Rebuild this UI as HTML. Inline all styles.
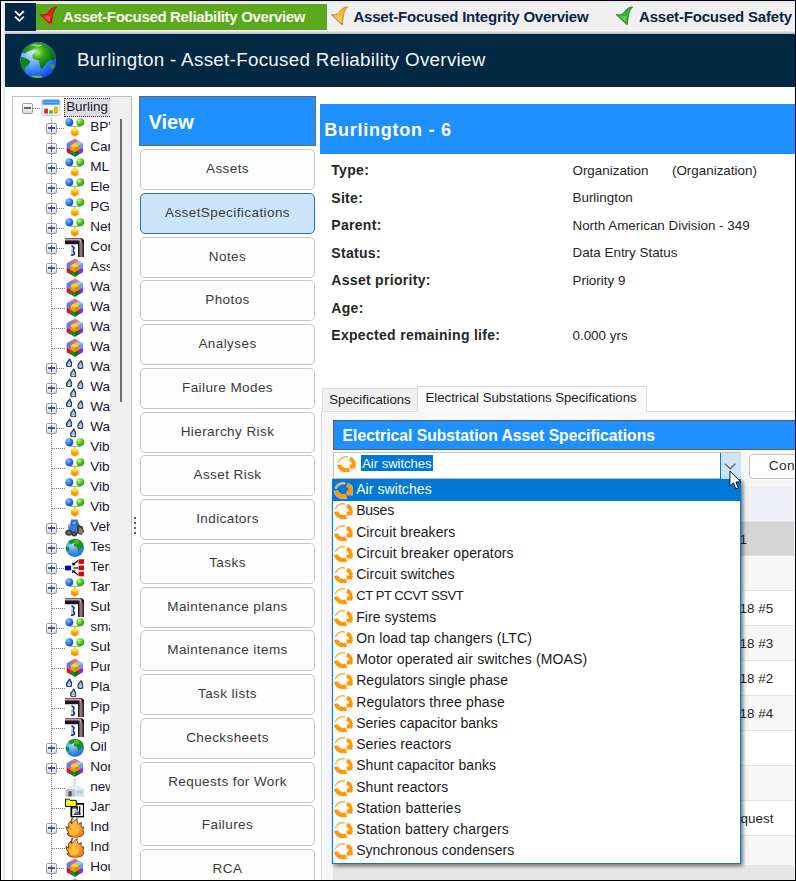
<!DOCTYPE html>
<html><head><meta charset="utf-8"><title>Asset-Focused Reliability Overview</title>
<style>
html,body{margin:0;padding:0}
body{width:796px;height:881px;overflow:hidden;position:relative;background:#fff;font-family:"Liberation Sans",sans-serif;}
div,span,svg{position:absolute;box-sizing:border-box}
.t{line-height:1;white-space:pre}
.btn{left:140px;width:175px;height:41px;border:1px solid #c6c6c6;border-radius:5px;background:#fdfdfd;text-align:center;font-size:13.5px;letter-spacing:.42px;color:#3a3a3a;line-height:37px;white-space:pre}
.btn.sel{background:#cce4f7;border:1.5px solid #2a70b4;}
.li{left:0;width:407px;height:21.25px}
.li .t{left:23.2px;font-size:14px;top:2.5px;color:#1a1a1a;letter-spacing:.07px}
.row{left:333px;width:461px;border-top:1px solid #e3e3e3}
</style></head>
<body>
<svg width="0" height="0" style="left:0;top:0"><defs>
<radialGradient id="gB" cx=".35" cy=".3" r=".8"><stop offset="0" stop-color="#8cc4ff"/><stop offset=".5" stop-color="#2b7bf0"/><stop offset="1" stop-color="#1440b0"/></radialGradient>
<radialGradient id="gG" cx=".35" cy=".3" r=".8"><stop offset="0" stop-color="#c8ff80"/><stop offset=".5" stop-color="#4cc81c"/><stop offset="1" stop-color="#1c8c08"/></radialGradient>
<radialGradient id="gGl" cx=".4" cy=".3" r=".8"><stop offset="0" stop-color="#b8e4ff"/><stop offset=".55" stop-color="#3c96f4"/><stop offset="1" stop-color="#1450d0"/></radialGradient>
<linearGradient id="gO" x1="0" y1="0" x2="0" y2="1"><stop offset="0" stop-color="#ffd800"/><stop offset="1" stop-color="#ff7800"/></linearGradient>
<linearGradient id="gF" x1="0" y1="0" x2="0" y2="1"><stop offset="0" stop-color="#ffd060"/><stop offset="1" stop-color="#ff7000"/></linearGradient>
<radialGradient id="gOc" gradientUnits="userSpaceOnUse" cx="12" cy="10" r="27"><stop offset="0" stop-color="#cce8ff"/><stop offset=".4" stop-color="#68b4fb"/><stop offset=".75" stop-color="#2c74f6"/><stop offset="1" stop-color="#1c48dc"/></radialGradient>
<radialGradient id="gLd" gradientUnits="userSpaceOnUse" cx="17" cy="10" r="16"><stop offset="0" stop-color="#b4ee54"/><stop offset=".45" stop-color="#34a41c"/><stop offset="1" stop-color="#087408"/></radialGradient>
<clipPath id="cpG"><circle cx="18" cy="18" r="17.600"/></clipPath>
<symbol id="bigglobe" viewBox="0 0 36 36">
 <circle cx="18" cy="18" r="18" fill="#1a4ee0" opacity=".85"/>
 <circle cx="18" cy="18" r="17.500" fill="url(#gOc)"/>
 <g clip-path="url(#cpG)">
 <path d="M6.300 4.200C4 6 2.800 8 2.100 10.300 3.500 11.200 4.800 11.300 5.700 10.900 7.500 9.500 9.500 8.300 11.800 7.800 13.500 7.400 15 7 16 7.200 16.600 8.300 16.500 9.500 16 10.300 14.500 10.900 13 11.500 12.400 12.700 12 14 12.200 15.300 13 16.300 14.500 17.500 16.500 17.700 18.400 18.100 19.300 20.500 19.500 23 20.200 25.300 20.700 26.200 21.500 26.300 22 25.900 23.500 24 25.300 22.300 26.800 20.500 28 19.300 29 18 30.500 17.500 31.300 17.900 32 18.300 32.900 18.100 33.700 17.600 34.300 17 34.800 16.300L37 16 36 0 8 0z" fill="url(#gLd)"/>
 <path d="M.9 14.500C3 14.800 4.800 15.400 6.300 16.300 7.800 17.100 9.300 18 10 19.300 9.600 20.700 8.900 21.900 8.100 22.900 7 23.600 5.800 24.300 5.100 25.300 4.700 26.500 4.900 27.800 5.100 29L3 28 0 22z" fill="#108410"/>
 <path d="M29.900 22.300C31 21.900 32.500 21.900 33.500 22.300L34.500 24 32.300 26.500C31.400 26.400 30.600 26 30.200 25.300z" fill="#30a828"/>
 <ellipse cx="16.300" cy="34.300" rx="6" ry="1.300" fill="#4cc444"/>
 <path d="M10 3.500c2-1 4-1.500 6-1.200 1 .8 2.500.3 4-.2 1 .4 2 1 2.500 1.500-2 0-3.500.5-5 1.200-1.500-.8-4.500-.8-7.500-1.300z" fill="#e8f8e0" opacity=".55"/>
 </g>
</symbol>
<symbol id="nodes" viewBox="0 0 20 20">
 <path d="M4.5 8.5H15.5M10 8.5V11" stroke="#b0b0b0" stroke-width="1.4" fill="none"/>
 <circle cx="4.4" cy="4.3" r="4" fill="url(#gB)"/><circle cx="15.6" cy="4.3" r="4" fill="url(#gG)"/>
 <path d="M10 10.2l3.8 2v4.6L10 19l-3.8-2.2v-4.6z" fill="url(#gO)"/>
 <path d="M10 10.2l3.8 2L10 14.2l-3.8-2z" fill="#ffe040"/>
</symbol>
<symbol id="cube" viewBox="0 0 20 20">
 <path d="M10 .8l8.2 4.6v9.2L10 19.2l-8.200-4.600V5.400z" fill="#8888e8"/>
 <path d="M10 .8l4.100 2.300L10 5.400 5.900 3.100z" fill="#f06878"/>
 <path d="M14.100 3.100l4.100 2.300L14.100 7.700 10 5.400z" fill="#9cc4f4"/>
 <path d="M5.900 3.100L10 5.400 5.900 7.700 1.800 5.400z" fill="#8080e0"/>
 <path d="M1.800 5.400l4.100 2.300v4.600L1.800 10z" fill="#7474e0"/>
 <path d="M18.200 5.400v4.600l-4.100 2.300V7.700z" fill="#6ca0e8"/>
 <path d="M1.800 10l4.100 2.300v4.600L1.800 14.600z" fill="#e81010"/>
 <path d="M18.200 10v4.600l-4.100 2.300v-4.600z" fill="#8c20f0"/>
 <path d="M5.900 12.300L10 14.600v4.600L5.900 16.900z" fill="#108c18"/>
 <path d="M14.100 12.300L10 14.600v4.600l4.100-2.300z" fill="#087010"/>
 <path d="M10 5.400l4.100 2.300v4.600L10 14.600 5.900 12.300V7.700z" fill="url(#gO)"/>
 <path d="M10 5.400l4.100 2.300L10 10 5.900 7.700z" fill="#ffd820"/>
 <path d="M10 10l4.100-2.300v4.600L10 14.600z" fill="#e88800"/>
</symbol>
<symbol id="pipe" viewBox="0 0 20 20">
 <path d="M0 0H15C18.500 0 20 2 20 5V19.300H13.300V6.300H0z" fill="#1c161e"/>
 <path d="M0 .4H14.500C16.300.4 17 1.500 17 3.500V19.300H14.900V4C14.900 2.800 14.400 2.500 13.300 2.500H0z" fill="#d0a0b4"/>
 <path d="M15.700 4.500h.5V19.300h-.5z" fill="#5c3c4c"/>
 <path d="M17.700 5h.8V19.300h-.8z" fill="#8c6478"/>
 <path d="M6.500 7.500c2.500 0 3.500 1.500 3.500 3 0 1.200-.7 2-1.500 2.300 1 .3 2 1.300 2 2.700 0 1.800-1.500 3-4 3H6v-1.800h.6c1.200 0 1.800-.5 1.800-1.400 0-.9-.7-1.500-1.900-1.500v-1.700c1.100 0 1.600-.6 1.600-1.400 0-.8-.6-1.300-1.600-1.300z" fill="#2c3c8c"/>
 <path d="M6.300 11h1.600v5H6.300z" fill="#a8c4f4"/>
</symbol>
<symbol id="drop" viewBox="0 0 7 10">
 <path d="M4.300.4C5 3 6.500 4.500 6.500 6.600 6.500 8.500 5.200 9.600 3.500 9.600S.5 8.500.5 6.600C.5 4.300 3 2.800 4.300.4z" fill="#a8bcd4" stroke="#2a4262" stroke-width="1.500"/>
 <path d="M2.300 7.200c.5.800 1.600.8 2.400.2" stroke="#f0f6ff" stroke-width=".9" fill="none"/>
</symbol>
<symbol id="drops" viewBox="0 0 20 20">
 <use href="#drop" x="1" y="0.500" width="6.400" height="9"/>
 <use href="#drop" x="12.500" y="2.200" width="6.400" height="9"/>
 <use href="#drop" x="5.200" y="10.800" width="6.400" height="9"/>
</symbol>
<symbol id="globe" viewBox="0 0 20 20">
 <circle cx="10" cy="10" r="9.300" fill="url(#gGl)"/>
 <path d="M3.500 3.500C6 1 10.500.2 13.800 1.600c2.200 1 4 2.800 4.900 5 .3 1.500-.3 3.200-1.300 4.300-.4-.9-.9-1.200-1.300-.4-.3 1.400-1.300 2.600-2.400 2.800-.8-1.300-.6-3.300-1.500-4.200-1.100-.2-2.400-.2-3-1.200-.5-1.200.3-2.300 1-2.900-1.400-.2-2.300.9-3.500 1.300-1 .3-2.300-.6-3.200-2.800z" fill="#1c9418"/>
 <path d="M9 2.500c1.500-1 4-.8 5.200.3.700 1.400.1 3-1.200 3.600-1.300.4-2.700-.2-3.400-1.300C9.200 4.300 8.700 3.300 9 2.500z" fill="#58c828" opacity=".75"/>
 <path d="M.9 8.600c1.400.1 2.700.9 3.500 2.100.4 1-.3 2-1.200 2.500-.7.500-1.300.4-1.700-.3C.9 11.600.7 10.100.9 8.600z" fill="#1c8c14"/>
 <path d="M5.500 17.700c2.500.9 5.500.9 8-.3-2 2-5.800 2.300-8 .3z" fill="#30b030" opacity=".8"/>
</symbol>
<symbol id="hier" viewBox="0 0 20 20">
 <rect x="0" y="7.800" width="6.300" height="4.800" fill="#0000d0"/>
 <rect x="13.800" y="1.300" width="6.200" height="4.700" fill="#e00000"/><rect x="13.800" y="7.700" width="6.200" height="4.700" fill="#e00000"/><rect x="13.800" y="14" width="6.200" height="4.700" fill="#e00000"/>
 <path d="M13.500 2.500L8.500 6.500M13.500 17.500L8.500 13.500" stroke="#000" stroke-width="1.200"/>
 <path d="M7.300 4.300l.3 3.400 3.300-.6zM7.300 15.700l.3-3.400 3.300.6z" fill="#000"/>
 <path d="M8.500 10.100h5" stroke="#444" stroke-width="1.500"/>
</symbol>
<symbol id="tractor" viewBox="0 0 20 20">
 <path d="M6 1.500h6.500l2.500 6 3 1.500v5H3.500V9.500L5 8.500z" fill="#3c7cd0"/>
 <path d="M7 2.800h4.500l1.500 4.500H6.300z" fill="#245cb0"/>
 <path d="M8 3.500h2.500l1 3H7.500z" fill="#78b0f0"/>
 <path d="M12.500 6.500l5.500 2.500 1.500 5-3 3.500-4.500-2z" fill="#2c3c58"/>
 <path d="M14 9.500l3.500 1.500 1 3.500-2 2.500-2.500-1.500z" fill="#8c7c5c"/>
 <ellipse cx="4" cy="15" rx="3.800" ry="3" fill="#38404c"/><ellipse cx="4" cy="15" rx="1.800" ry="1.300" fill="#7c7060"/>
 <ellipse cx="9.500" cy="16.200" rx="3" ry="2.600" fill="#30384c"/><ellipse cx="9.500" cy="16.200" rx="1.300" ry="1" fill="#786c5c"/>
 <path d="M4 6v5" stroke="#5c6c84" stroke-width="1"/>
</symbol>
<symbol id="factory" viewBox="0 0 20 20">
 <path d="M8.800 0h2v8h-2z" fill="#c4c4c8"/><path d="M9.300 0h.8v8h-.8z" fill="#e8e8ec"/>
 <path d="M.5 11.500L7 7.500h7l5.500 4v7.300H.5z" fill="#d4d6da"/>
 <path d="M.5 11.500L7 7.500h7l5.500 4-6.500 1z" fill="#e8eaee"/>
 <path d="M.5 11.500h9.500v7.300H.5z" fill="#c0c2c8"/>
 <path d="M10 12.500l9.500-1v7.300H10z" fill="#dcdee2"/>
 <rect x="3.500" y="13.500" width="3.300" height="5.300" fill="#505458"/>
 <rect x="12" y="13" width="6" height="2.500" fill="#90d4f0"/>
</symbol>
<symbol id="folder" viewBox="0 0 20 20">
 <path d="M6.500 6h12.700v13.300H6.500z" fill="#fff" stroke="#000" stroke-width="1.900"/>
 <path d="M7 10h6M12.500 8v4M15 8.500v8M9 16.500h7" stroke="#000" stroke-width="1.300" fill="none"/>
 <path d="M8.500 12.800h5" stroke="#b0b0b0" stroke-width="1.200"/>
 <path d="M10.500 14.600h4" stroke="#4848ff" stroke-width="1.400"/>
 <path d="M.4 1.200h3.800l1 1.200h6.300v6.200H.4z" fill="#ffff00" stroke="#000" stroke-width="1"/>
 <path d="M1 1.700h3l.8 1.100H1z" fill="#60e0ff"/>
</symbol>
<symbol id="fire" viewBox="0 0 20 20">
 <path d="M7.500 0c.5 2-1.500 3.500-.5 5.500C8.500 4 10.500 2 12.500.5c-.8 2.800.5 4.500 1.500 6 .8-1 1.800-1.600 3-1.800-1.300 1.700-.5 3.500.3 5 .8-.5 1.500-.7 2.400-.5-1.400 1.300-1.500 3-1 4.600.6.300 1 .2 1.300 0-.5 2.500-2.800 5.200-6.500 5.900-4.500.8-9.500-.3-11.500-3.700 1 .2 1.700 0 2.300-.5C2.500 13.500 1.300 11 1 8.500c1 1 2 1.500 3 1.700C3 7.500 3.500 5 5.500 3.500c.2 1 .5 1.500 1 2C6 3.500 6.500 1.500 7.500 0z" fill="url(#gF)" stroke="#5c2c00" stroke-width=".9"/>
 <path d="M10 5c-.5 2.500 1.500 4.500 2 6.500.8-1 1-2 1-3 1.500 2 2 5 .5 7.500-1.500 2-5 2.500-7.500 1-2-1.500-2.500-4-1.500-6.500.5 1 1 1.500 2 2C6 9.500 8 7.500 10 5z" fill="#ffc840" opacity=".85"/>
</symbol>
<symbol id="rootic" viewBox="0 0 20 18">
 <rect x=".5" y=".5" width="19" height="17" rx="2" fill="#fdfdff" stroke="#a8c8f0" stroke-width="1"/>
 <path d="M1 2.500Q1 1 2.500 1h15Q19 1 19 2.500V6H1z" fill="#2c90f4"/>
 <path d="M1 3.500h18" stroke="#60b0ff" stroke-width="1.500"/>
 <rect x="2.800" y="10" width="4" height="5.500" rx="1" fill="#f02020"/>
 <rect x="8" y="11.800" width="4" height="3.700" rx="1" fill="#40c020"/>
 <rect x="13.200" y="8" width="4" height="7.500" rx="1" fill="#ff9800"/>
 <rect x="14" y="10" width="2" height="4" fill="#ffd000"/>
</symbol>
<symbol id="ring" viewBox="0 0 18.800 16.300">
 <path d="M1.090 6.280A8.600 7.400 0 0 1 10.890.910" fill="none" stroke="#ffae38" stroke-width="1.500"/>
 <path d="M2.17 8.57A7.25 6.0 0 0 0 12.35 13.63" fill="none" stroke="#ff980a" stroke-width="4.300"/>
 <path d="M12.87 2.68A7.4 6.2 0 0 1 16.26 10.47" fill="none" stroke="#ff980a" stroke-width="4"/>
 <path d="M12.600 8.600h5.900v4h-5.900z" fill="#ff980a"/>
</symbol>
<symbol id="ringw" viewBox="-.5 -.5 19.800 17.300">
 <path d="M1.090 6.280A8.600 7.400 0 0 1 10.890.910" fill="none" stroke="#fff" stroke-width="2.500"/>
 <path d="M1.800 8.200A7.600 6.500 0 0 0 12.100 14.300" fill="none" stroke="#fff" stroke-width="4.700"/>
 <path d="M13.250 2.480A7.700 6.600 0 0 1 16.640 10.460" fill="none" stroke="#fff" stroke-width="4.600"/>
 <path d="M12.300 8.300h6.600v4.800h-6.600z" fill="#fff"/>
</symbol>
<symbol id="flag" viewBox="0 0 17 19">
 <path d="M16.600.9C13 1 10.500 3 8.500 6 6.500 8.500 4 9.500.2 8.600L10 18c1 1 1.500.500 1.500-1C12 12 12.500 7 14 4.500 14.800 3 15.800 2 16.600.9z"/>
</symbol>
</defs></svg>
<div style="left:0;top:0;width:796px;height:881px;border:1px solid #000;z-index:50"></div>
<div style="left:3px;top:1px;width:2px;height:879px;background:#e4e7ee"></div>
<div style="left:1px;top:1px;width:794px;height:2px;background:#e6eaf0"></div>
<div style="left:5px;top:3px;width:790px;height:27px;background:#f0f0f0"></div>
<div style="left:5px;top:31px;width:790px;height:3px;background:linear-gradient(#e8e8ea,#b4b8c0)"></div>
<div style="left:5px;top:3px;width:31px;height:28px;background:#022844"></div>
<svg style="left:5px;top:3px" width="31" height="28" viewBox="0 0 31 28"><path d="M10 8.200l4.400 4.200 4.400-4.200M10 13.600l4.400 4.200 4.400-4.200" fill="none" stroke="#fff" stroke-width="1.800"/></svg>
<div style="left:36px;top:4px;width:291px;height:26px;background:#5aa81c"></div>
<svg style="left:40px;top:6px;fill:#f01818;stroke:#a01010;stroke-width:.8" width="17" height="19"><use href="#flag"/><path d="M4 10.500l5.500 5.500 1-6z" fill="#fff" stroke="none" opacity=".22"/><circle cx="10.900" cy="18" r="1" fill="#d87010" stroke="none"/></svg>
<span class="t" style="left:63px;top:9.30px;font-size:15px;color:#fbfff4;font-weight:700;letter-spacing:-0.33px;">Asset-Focused Reliability Overview</span>
<svg style="left:331px;top:6px;fill:#f8b838;stroke:#b87818;stroke-width:.8" width="17" height="19"><use href="#flag"/><path d="M4 10.500l5.500 5.500 1-6z" fill="#fff" stroke="none" opacity=".22"/><circle cx="10.900" cy="18" r="1" fill="#d87010" stroke="none"/></svg>
<span class="t" style="left:353.4px;top:9.30px;font-size:15px;color:#0c2448;font-weight:700;letter-spacing:-0.21px;">Asset-Focused Integrity Overview</span>
<svg style="left:616.4px;top:6px;fill:#38b828;stroke:#186c10;stroke-width:.8" width="17" height="19"><use href="#flag"/><path d="M4 10.500l5.500 5.500 1-6z" fill="#fff" stroke="none" opacity=".22"/><circle cx="10.900" cy="18" r="1" fill="#d87010" stroke="none"/></svg>
<span class="t" style="left:639px;top:9.30px;font-size:15px;color:#0c2448;font-weight:700;letter-spacing:-0.19px;">Asset-Focused Safety Overview</span>
<div style="left:5px;top:34px;width:790px;height:53px;background:#022844"></div>
<svg style="left:19.500px;top:41.500px" width="36.500" height="36.500"><use href="#bigglobe"/></svg>
<span class="t" style="left:77px;top:50.99px;font-size:18.8px;color:#f4f4f4;letter-spacing:0.3px;">Burlington - Asset-Focused Reliability Overview</span>
<div style="left:12px;top:96px;width:120px;height:790px;border:1px solid #bcc0c8;border-left:1.5px solid #c0c4cc;background:#fff"></div>
<div style="left:110px;top:97px;width:21px;height:790px;background:#f0f0f0"></div>
<div style="left:120px;top:119px;width:2.400px;height:283px;background:#6e6e6e"></div>
<div style="left:0;top:0;width:110px;height:881px;overflow:hidden"><div style="left:51px;top:118px;width:1px;height:770px;background:repeating-linear-gradient(#808080 0 1px,transparent 1px 2px)"></div><div style="left:33px;top:108px;width:8px;height:1px;background:repeating-linear-gradient(90deg,#808080 0 1px,transparent 1px 2px)"></div><div style="left:22.0px;top:102.8px;width:11px;height:11px;border:1px solid #9a9a9a;border-radius:2px;background:linear-gradient(#fff,#dcdcdc)"></div><div style="left:24.0px;top:107.3px;width:7px;height:1.600px;background:#5a6690"></div><svg style="left:41px;top:99px" width="20" height="17"><use href="#rootic"/></svg><div style="left:63.500px;top:97.500px;width:50px;height:19.500px;border:1px dotted #303030;background:#dcdcdc"></div><span class="t" style="left:66.2px;top:99.96px;font-size:13.4px;color:#1c1c30;">Burling</span><div style="left:57px;top:128px;width:8px;height:1px;background:repeating-linear-gradient(90deg,#808080 0 1px,transparent 1px 2px)"></div><div style="left:46.0px;top:122.69999999999999px;width:11px;height:11px;border:1px solid #9a9a9a;border-radius:2px;background:linear-gradient(#fff,#dcdcdc)"></div><div style="left:48.0px;top:127.19999999999999px;width:7px;height:1.600px;background:#3a55a0"></div><div style="left:50.7px;top:124.69999999999999px;width:1.600px;height:7px;background:#3a55a0"></div><svg style="left:64.800px;top:118.2px" width="19.600" height="19.600"><use href="#nodes"/></svg><span class="t" style="left:90.2px;top:120.19px;font-size:13.6px;color:#14142c;">BP's</span><div style="left:57px;top:148px;width:8px;height:1px;background:repeating-linear-gradient(90deg,#808080 0 1px,transparent 1px 2px)"></div><div style="left:46.0px;top:142.7px;width:11px;height:11px;border:1px solid #9a9a9a;border-radius:2px;background:linear-gradient(#fff,#dcdcdc)"></div><div style="left:48.0px;top:147.2px;width:7px;height:1.600px;background:#3a55a0"></div><div style="left:50.7px;top:144.7px;width:1.600px;height:7px;background:#3a55a0"></div><svg style="left:64.800px;top:138.2px" width="19.600" height="19.600"><use href="#cube"/></svg><span class="t" style="left:90.2px;top:140.19px;font-size:13.6px;color:#14142c;">Cargo</span><div style="left:57px;top:168px;width:8px;height:1px;background:repeating-linear-gradient(90deg,#808080 0 1px,transparent 1px 2px)"></div><div style="left:46.0px;top:162.7px;width:11px;height:11px;border:1px solid #9a9a9a;border-radius:2px;background:linear-gradient(#fff,#dcdcdc)"></div><div style="left:48.0px;top:167.2px;width:7px;height:1.600px;background:#3a55a0"></div><div style="left:50.7px;top:164.7px;width:1.600px;height:7px;background:#3a55a0"></div><svg style="left:64.800px;top:158.2px" width="19.600" height="19.600"><use href="#nodes"/></svg><span class="t" style="left:90.2px;top:160.19px;font-size:13.6px;color:#14142c;">ML T</span><div style="left:57px;top:188px;width:8px;height:1px;background:repeating-linear-gradient(90deg,#808080 0 1px,transparent 1px 2px)"></div><div style="left:46.0px;top:182.7px;width:11px;height:11px;border:1px solid #9a9a9a;border-radius:2px;background:linear-gradient(#fff,#dcdcdc)"></div><div style="left:48.0px;top:187.2px;width:7px;height:1.600px;background:#3a55a0"></div><div style="left:50.7px;top:184.7px;width:1.600px;height:7px;background:#3a55a0"></div><svg style="left:64.800px;top:178.2px" width="19.600" height="19.600"><use href="#nodes"/></svg><span class="t" style="left:90.2px;top:180.19px;font-size:13.6px;color:#14142c;">Elec</span><div style="left:57px;top:208px;width:8px;height:1px;background:repeating-linear-gradient(90deg,#808080 0 1px,transparent 1px 2px)"></div><div style="left:46.0px;top:202.7px;width:11px;height:11px;border:1px solid #9a9a9a;border-radius:2px;background:linear-gradient(#fff,#dcdcdc)"></div><div style="left:48.0px;top:207.2px;width:7px;height:1.600px;background:#3a55a0"></div><div style="left:50.7px;top:204.7px;width:1.600px;height:7px;background:#3a55a0"></div><svg style="left:64.800px;top:198.2px" width="19.600" height="19.600"><use href="#nodes"/></svg><span class="t" style="left:90.2px;top:200.19px;font-size:13.6px;color:#14142c;">PGE</span><div style="left:57px;top:228px;width:8px;height:1px;background:repeating-linear-gradient(90deg,#808080 0 1px,transparent 1px 2px)"></div><div style="left:46.0px;top:222.7px;width:11px;height:11px;border:1px solid #9a9a9a;border-radius:2px;background:linear-gradient(#fff,#dcdcdc)"></div><div style="left:48.0px;top:227.2px;width:7px;height:1.600px;background:#3a55a0"></div><div style="left:50.7px;top:224.7px;width:1.600px;height:7px;background:#3a55a0"></div><svg style="left:64.800px;top:218.2px" width="19.600" height="19.600"><use href="#nodes"/></svg><span class="t" style="left:90.2px;top:220.19px;font-size:13.6px;color:#14142c;">Netw</span><div style="left:57px;top:248px;width:8px;height:1px;background:repeating-linear-gradient(90deg,#808080 0 1px,transparent 1px 2px)"></div><div style="left:46.0px;top:242.7px;width:11px;height:11px;border:1px solid #9a9a9a;border-radius:2px;background:linear-gradient(#fff,#dcdcdc)"></div><div style="left:48.0px;top:247.2px;width:7px;height:1.600px;background:#3a55a0"></div><div style="left:50.7px;top:244.7px;width:1.600px;height:7px;background:#3a55a0"></div><svg style="left:64.800px;top:238.2px" width="19.600" height="19.600"><use href="#pipe"/></svg><span class="t" style="left:90.2px;top:240.19px;font-size:13.6px;color:#14142c;">Corr</span><div style="left:57px;top:268px;width:8px;height:1px;background:repeating-linear-gradient(90deg,#808080 0 1px,transparent 1px 2px)"></div><div style="left:46.0px;top:262.7px;width:11px;height:11px;border:1px solid #9a9a9a;border-radius:2px;background:linear-gradient(#fff,#dcdcdc)"></div><div style="left:48.0px;top:267.2px;width:7px;height:1.600px;background:#3a55a0"></div><div style="left:50.7px;top:264.7px;width:1.600px;height:7px;background:#3a55a0"></div><svg style="left:64.800px;top:258.2px" width="19.600" height="19.600"><use href="#cube"/></svg><span class="t" style="left:90.2px;top:260.19px;font-size:13.6px;color:#14142c;">Asse</span><div style="left:52px;top:288px;width:13px;height:1px;background:repeating-linear-gradient(90deg,#808080 0 1px,transparent 1px 2px)"></div><svg style="left:64.800px;top:278.2px" width="19.600" height="19.600"><use href="#cube"/></svg><span class="t" style="left:90.2px;top:280.19px;font-size:13.6px;color:#14142c;">Wate</span><div style="left:52px;top:308px;width:13px;height:1px;background:repeating-linear-gradient(90deg,#808080 0 1px,transparent 1px 2px)"></div><svg style="left:64.800px;top:298.2px" width="19.600" height="19.600"><use href="#cube"/></svg><span class="t" style="left:90.2px;top:300.19px;font-size:13.6px;color:#14142c;">Wate</span><div style="left:52px;top:328px;width:13px;height:1px;background:repeating-linear-gradient(90deg,#808080 0 1px,transparent 1px 2px)"></div><svg style="left:64.800px;top:318.2px" width="19.600" height="19.600"><use href="#cube"/></svg><span class="t" style="left:90.2px;top:320.19px;font-size:13.6px;color:#14142c;">Wate</span><div style="left:52px;top:348px;width:13px;height:1px;background:repeating-linear-gradient(90deg,#808080 0 1px,transparent 1px 2px)"></div><svg style="left:64.800px;top:338.2px" width="19.600" height="19.600"><use href="#cube"/></svg><span class="t" style="left:90.2px;top:340.19px;font-size:13.6px;color:#14142c;">Wate</span><div style="left:57px;top:368px;width:8px;height:1px;background:repeating-linear-gradient(90deg,#808080 0 1px,transparent 1px 2px)"></div><div style="left:46.0px;top:362.7px;width:11px;height:11px;border:1px solid #9a9a9a;border-radius:2px;background:linear-gradient(#fff,#dcdcdc)"></div><div style="left:48.0px;top:367.2px;width:7px;height:1.600px;background:#3a55a0"></div><div style="left:50.7px;top:364.7px;width:1.600px;height:7px;background:#3a55a0"></div><svg style="left:64.800px;top:358.2px" width="19.600" height="19.600"><use href="#drops"/></svg><span class="t" style="left:90.2px;top:360.19px;font-size:13.6px;color:#14142c;">Wate</span><div style="left:57px;top:388px;width:8px;height:1px;background:repeating-linear-gradient(90deg,#808080 0 1px,transparent 1px 2px)"></div><div style="left:46.0px;top:382.7px;width:11px;height:11px;border:1px solid #9a9a9a;border-radius:2px;background:linear-gradient(#fff,#dcdcdc)"></div><div style="left:48.0px;top:387.2px;width:7px;height:1.600px;background:#3a55a0"></div><div style="left:50.7px;top:384.7px;width:1.600px;height:7px;background:#3a55a0"></div><svg style="left:64.800px;top:378.2px" width="19.600" height="19.600"><use href="#drops"/></svg><span class="t" style="left:90.2px;top:380.19px;font-size:13.6px;color:#14142c;">Wate</span><div style="left:57px;top:408px;width:8px;height:1px;background:repeating-linear-gradient(90deg,#808080 0 1px,transparent 1px 2px)"></div><div style="left:46.0px;top:402.7px;width:11px;height:11px;border:1px solid #9a9a9a;border-radius:2px;background:linear-gradient(#fff,#dcdcdc)"></div><div style="left:48.0px;top:407.2px;width:7px;height:1.600px;background:#3a55a0"></div><div style="left:50.7px;top:404.7px;width:1.600px;height:7px;background:#3a55a0"></div><svg style="left:64.800px;top:398.2px" width="19.600" height="19.600"><use href="#drops"/></svg><span class="t" style="left:90.2px;top:400.19px;font-size:13.6px;color:#14142c;">Wate</span><div style="left:57px;top:428px;width:8px;height:1px;background:repeating-linear-gradient(90deg,#808080 0 1px,transparent 1px 2px)"></div><div style="left:46.0px;top:422.7px;width:11px;height:11px;border:1px solid #9a9a9a;border-radius:2px;background:linear-gradient(#fff,#dcdcdc)"></div><div style="left:48.0px;top:427.2px;width:7px;height:1.600px;background:#3a55a0"></div><div style="left:50.7px;top:424.7px;width:1.600px;height:7px;background:#3a55a0"></div><svg style="left:64.800px;top:418.2px" width="19.600" height="19.600"><use href="#drops"/></svg><span class="t" style="left:90.2px;top:420.19px;font-size:13.6px;color:#14142c;">Wate</span><div style="left:52px;top:448px;width:13px;height:1px;background:repeating-linear-gradient(90deg,#808080 0 1px,transparent 1px 2px)"></div><svg style="left:64.800px;top:438.2px" width="19.600" height="19.600"><use href="#nodes"/></svg><span class="t" style="left:90.2px;top:440.19px;font-size:13.6px;color:#14142c;">Vibr</span><div style="left:52px;top:468px;width:13px;height:1px;background:repeating-linear-gradient(90deg,#808080 0 1px,transparent 1px 2px)"></div><svg style="left:64.800px;top:458.2px" width="19.600" height="19.600"><use href="#nodes"/></svg><span class="t" style="left:90.2px;top:460.19px;font-size:13.6px;color:#14142c;">Vibr</span><div style="left:52px;top:488px;width:13px;height:1px;background:repeating-linear-gradient(90deg,#808080 0 1px,transparent 1px 2px)"></div><svg style="left:64.800px;top:478.2px" width="19.600" height="19.600"><use href="#nodes"/></svg><span class="t" style="left:90.2px;top:480.19px;font-size:13.6px;color:#14142c;">Vibr</span><div style="left:52px;top:508px;width:13px;height:1px;background:repeating-linear-gradient(90deg,#808080 0 1px,transparent 1px 2px)"></div><svg style="left:64.800px;top:498.2px" width="19.600" height="19.600"><use href="#nodes"/></svg><span class="t" style="left:90.2px;top:500.19px;font-size:13.6px;color:#14142c;">Vibr</span><div style="left:57px;top:528px;width:8px;height:1px;background:repeating-linear-gradient(90deg,#808080 0 1px,transparent 1px 2px)"></div><div style="left:46.0px;top:522.7px;width:11px;height:11px;border:1px solid #9a9a9a;border-radius:2px;background:linear-gradient(#fff,#dcdcdc)"></div><div style="left:48.0px;top:527.2px;width:7px;height:1.600px;background:#3a55a0"></div><div style="left:50.7px;top:524.7px;width:1.600px;height:7px;background:#3a55a0"></div><svg style="left:64.800px;top:518.2px" width="19.600" height="19.600"><use href="#tractor"/></svg><span class="t" style="left:90.2px;top:520.19px;font-size:13.6px;color:#14142c;">Vehi</span><div style="left:57px;top:548px;width:8px;height:1px;background:repeating-linear-gradient(90deg,#808080 0 1px,transparent 1px 2px)"></div><div style="left:46.0px;top:542.7px;width:11px;height:11px;border:1px solid #9a9a9a;border-radius:2px;background:linear-gradient(#fff,#dcdcdc)"></div><div style="left:48.0px;top:547.2px;width:7px;height:1.600px;background:#3a55a0"></div><div style="left:50.7px;top:544.7px;width:1.600px;height:7px;background:#3a55a0"></div><svg style="left:64.800px;top:538.2px" width="19.600" height="19.600"><use href="#globe"/></svg><span class="t" style="left:90.2px;top:540.19px;font-size:13.6px;color:#14142c;">Test</span><div style="left:57px;top:568px;width:8px;height:1px;background:repeating-linear-gradient(90deg,#808080 0 1px,transparent 1px 2px)"></div><div style="left:46.0px;top:562.7px;width:11px;height:11px;border:1px solid #9a9a9a;border-radius:2px;background:linear-gradient(#fff,#dcdcdc)"></div><div style="left:48.0px;top:567.2px;width:7px;height:1.600px;background:#3a55a0"></div><div style="left:50.7px;top:564.7px;width:1.600px;height:7px;background:#3a55a0"></div><svg style="left:64.800px;top:558.2px" width="19.600" height="19.600"><use href="#hier"/></svg><span class="t" style="left:90.2px;top:560.19px;font-size:13.6px;color:#14142c;">Term</span><div style="left:57px;top:588px;width:8px;height:1px;background:repeating-linear-gradient(90deg,#808080 0 1px,transparent 1px 2px)"></div><div style="left:46.0px;top:582.7px;width:11px;height:11px;border:1px solid #9a9a9a;border-radius:2px;background:linear-gradient(#fff,#dcdcdc)"></div><div style="left:48.0px;top:587.2px;width:7px;height:1.600px;background:#3a55a0"></div><div style="left:50.7px;top:584.7px;width:1.600px;height:7px;background:#3a55a0"></div><svg style="left:64.800px;top:578.2px" width="19.600" height="19.600"><use href="#nodes"/></svg><span class="t" style="left:90.2px;top:580.19px;font-size:13.6px;color:#14142c;">Tank</span><div style="left:52px;top:608px;width:13px;height:1px;background:repeating-linear-gradient(90deg,#808080 0 1px,transparent 1px 2px)"></div><svg style="left:64.800px;top:598.2px" width="19.600" height="19.600"><use href="#pipe"/></svg><span class="t" style="left:90.2px;top:600.19px;font-size:13.6px;color:#14142c;">Subs</span><div style="left:57px;top:628px;width:8px;height:1px;background:repeating-linear-gradient(90deg,#808080 0 1px,transparent 1px 2px)"></div><div style="left:46.0px;top:622.7px;width:11px;height:11px;border:1px solid #9a9a9a;border-radius:2px;background:linear-gradient(#fff,#dcdcdc)"></div><div style="left:48.0px;top:627.2px;width:7px;height:1.600px;background:#3a55a0"></div><div style="left:50.7px;top:624.7px;width:1.600px;height:7px;background:#3a55a0"></div><svg style="left:64.800px;top:618.2px" width="19.600" height="19.600"><use href="#nodes"/></svg><span class="t" style="left:90.2px;top:620.19px;font-size:13.6px;color:#14142c;">sma</span><div style="left:52px;top:648px;width:13px;height:1px;background:repeating-linear-gradient(90deg,#808080 0 1px,transparent 1px 2px)"></div><svg style="left:64.800px;top:638.2px" width="19.600" height="19.600"><use href="#nodes"/></svg><span class="t" style="left:90.2px;top:640.19px;font-size:13.6px;color:#14142c;">Subs</span><div style="left:52px;top:668px;width:13px;height:1px;background:repeating-linear-gradient(90deg,#808080 0 1px,transparent 1px 2px)"></div><svg style="left:64.800px;top:658.2px" width="19.600" height="19.600"><use href="#cube"/></svg><span class="t" style="left:90.2px;top:660.19px;font-size:13.6px;color:#14142c;">Pum</span><div style="left:52px;top:688px;width:13px;height:1px;background:repeating-linear-gradient(90deg,#808080 0 1px,transparent 1px 2px)"></div><svg style="left:64.800px;top:678.2px" width="19.600" height="19.600"><use href="#drops"/></svg><span class="t" style="left:90.2px;top:680.19px;font-size:13.6px;color:#14142c;">Plan</span><div style="left:52px;top:708px;width:13px;height:1px;background:repeating-linear-gradient(90deg,#808080 0 1px,transparent 1px 2px)"></div><svg style="left:64.800px;top:698.2px" width="19.600" height="19.600"><use href="#pipe"/></svg><span class="t" style="left:90.2px;top:700.19px;font-size:13.6px;color:#14142c;">Pipe</span><div style="left:52px;top:728px;width:13px;height:1px;background:repeating-linear-gradient(90deg,#808080 0 1px,transparent 1px 2px)"></div><svg style="left:64.800px;top:718.2px" width="19.600" height="19.600"><use href="#pipe"/></svg><span class="t" style="left:90.2px;top:720.19px;font-size:13.6px;color:#14142c;">Pipe</span><div style="left:57px;top:748px;width:8px;height:1px;background:repeating-linear-gradient(90deg,#808080 0 1px,transparent 1px 2px)"></div><div style="left:46.0px;top:742.7px;width:11px;height:11px;border:1px solid #9a9a9a;border-radius:2px;background:linear-gradient(#fff,#dcdcdc)"></div><div style="left:48.0px;top:747.2px;width:7px;height:1.600px;background:#3a55a0"></div><div style="left:50.7px;top:744.7px;width:1.600px;height:7px;background:#3a55a0"></div><svg style="left:64.800px;top:738.2px" width="19.600" height="19.600"><use href="#globe"/></svg><span class="t" style="left:90.2px;top:740.19px;font-size:13.6px;color:#14142c;">Oil </span><div style="left:57px;top:768px;width:8px;height:1px;background:repeating-linear-gradient(90deg,#808080 0 1px,transparent 1px 2px)"></div><div style="left:46.0px;top:762.7px;width:11px;height:11px;border:1px solid #9a9a9a;border-radius:2px;background:linear-gradient(#fff,#dcdcdc)"></div><div style="left:48.0px;top:767.2px;width:7px;height:1.600px;background:#3a55a0"></div><div style="left:50.7px;top:764.7px;width:1.600px;height:7px;background:#3a55a0"></div><svg style="left:64.800px;top:758.2px" width="19.600" height="19.600"><use href="#cube"/></svg><span class="t" style="left:90.2px;top:760.19px;font-size:13.6px;color:#14142c;">Nort</span><div style="left:52px;top:788px;width:13px;height:1px;background:repeating-linear-gradient(90deg,#808080 0 1px,transparent 1px 2px)"></div><svg style="left:64.800px;top:778.2px" width="19.600" height="19.600"><use href="#factory"/></svg><span class="t" style="left:90.2px;top:780.19px;font-size:13.6px;color:#14142c;">new</span><div style="left:52px;top:808px;width:13px;height:1px;background:repeating-linear-gradient(90deg,#808080 0 1px,transparent 1px 2px)"></div><svg style="left:64.800px;top:798.2px" width="19.600" height="19.600"><use href="#folder"/></svg><span class="t" style="left:90.2px;top:800.19px;font-size:13.6px;color:#14142c;">Janu</span><div style="left:57px;top:828px;width:8px;height:1px;background:repeating-linear-gradient(90deg,#808080 0 1px,transparent 1px 2px)"></div><div style="left:46.0px;top:822.7px;width:11px;height:11px;border:1px solid #9a9a9a;border-radius:2px;background:linear-gradient(#fff,#dcdcdc)"></div><div style="left:48.0px;top:827.2px;width:7px;height:1.600px;background:#3a55a0"></div><div style="left:50.7px;top:824.7px;width:1.600px;height:7px;background:#3a55a0"></div><svg style="left:64.800px;top:818.2px" width="19.600" height="19.600"><use href="#fire"/></svg><span class="t" style="left:90.2px;top:820.19px;font-size:13.6px;color:#14142c;">Indu</span><div style="left:52px;top:848px;width:13px;height:1px;background:repeating-linear-gradient(90deg,#808080 0 1px,transparent 1px 2px)"></div><svg style="left:64.800px;top:838.2px" width="19.600" height="19.600"><use href="#fire"/></svg><span class="t" style="left:90.2px;top:840.19px;font-size:13.6px;color:#14142c;">Indu</span><div style="left:57px;top:868px;width:8px;height:1px;background:repeating-linear-gradient(90deg,#808080 0 1px,transparent 1px 2px)"></div><div style="left:46.0px;top:862.7px;width:11px;height:11px;border:1px solid #9a9a9a;border-radius:2px;background:linear-gradient(#fff,#dcdcdc)"></div><div style="left:48.0px;top:867.2px;width:7px;height:1.600px;background:#3a55a0"></div><div style="left:50.7px;top:864.7px;width:1.600px;height:7px;background:#3a55a0"></div><svg style="left:64.800px;top:858.2px" width="19.600" height="19.600"><use href="#cube"/></svg><span class="t" style="left:90.2px;top:860.19px;font-size:13.6px;color:#14142c;">Hous</span><div style="left:52px;top:888px;width:13px;height:1px;background:repeating-linear-gradient(90deg,#808080 0 1px,transparent 1px 2px)"></div><svg style="left:64.800px;top:878.2px" width="19.600" height="19.600"><use href="#cube"/></svg><span class="t" style="left:90.2px;top:880.19px;font-size:13.6px;color:#14142c;">Hea</span></div>
<div style="left:133.500px;top:516.8px;width:2px;height:2px;background:#5c5c5c"></div>
<div style="left:133.500px;top:521.8px;width:2px;height:2px;background:#5c5c5c"></div>
<div style="left:133.500px;top:526.8px;width:2px;height:2px;background:#5c5c5c"></div>
<div style="left:133.500px;top:531.8px;width:2px;height:2px;background:#5c5c5c"></div>
<div style="left:139px;top:96px;width:177px;height:50px;background:#1e90ff;border:1px solid #686868"></div>
<span class="t" style="left:148.5px;top:112.07px;font-size:20px;color:#fff;font-weight:700;">View</span>
<div class="btn" style="top:149.00px">Assets</div>
<div class="btn sel" style="top:192.75px">AssetSpecifications</div>
<div class="btn" style="top:236.50px">Notes</div>
<div class="btn" style="top:280.25px">Photos</div>
<div class="btn" style="top:324.00px">Analyses</div>
<div class="btn" style="top:367.75px">Failure Modes</div>
<div class="btn" style="top:411.50px">Hierarchy Risk</div>
<div class="btn" style="top:455.25px">Asset Risk</div>
<div class="btn" style="top:499.00px">Indicators</div>
<div class="btn" style="top:542.75px">Tasks</div>
<div class="btn" style="top:586.50px">Maintenance plans</div>
<div class="btn" style="top:630.25px">Maintenance items</div>
<div class="btn" style="top:674.00px">Task lists</div>
<div class="btn" style="top:717.75px">Checksheets</div>
<div class="btn" style="top:761.50px">Requests for Work</div>
<div class="btn" style="top:805.25px">Failures</div>
<div class="btn" style="top:849.00px">RCA</div>
<div style="left:320px;top:104px;width:475px;height:50px;background:#1e90ff"></div>
<span class="t" style="left:324.3px;top:120.56px;font-size:18px;color:#fff;font-weight:700;letter-spacing:0.75px;">Burlington - 6</span>
<span class="t" style="left:331.3px;top:163.25px;font-size:14px;color:#262626;font-weight:700;letter-spacing:0.3px;">Type:</span>
<span class="t" style="left:572.5px;top:163.86px;font-size:13.4px;color:#262626;">Organization</span>
<span class="t" style="left:331.3px;top:190.75px;font-size:14px;color:#262626;font-weight:700;letter-spacing:0.3px;">Site:</span>
<span class="t" style="left:572.5px;top:191.36px;font-size:13.4px;color:#262626;">Burlington</span>
<span class="t" style="left:331.3px;top:218.25px;font-size:14px;color:#262626;font-weight:700;letter-spacing:0.3px;">Parent:</span>
<span class="t" style="left:572.5px;top:218.86px;font-size:13.4px;color:#262626;">North American Division - 349</span>
<span class="t" style="left:331.3px;top:245.75px;font-size:14px;color:#262626;font-weight:700;letter-spacing:0.3px;">Status:</span>
<span class="t" style="left:572.5px;top:246.36px;font-size:13.4px;color:#262626;">Data Entry Status</span>
<span class="t" style="left:331.3px;top:273.25px;font-size:14px;color:#262626;font-weight:700;letter-spacing:0.3px;">Asset priority:</span>
<span class="t" style="left:572.5px;top:273.86px;font-size:13.4px;color:#262626;">Priority 9</span>
<span class="t" style="left:331.3px;top:300.75px;font-size:14px;color:#262626;font-weight:700;letter-spacing:0.3px;">Age:</span>
<span class="t" style="left:331.3px;top:328.25px;font-size:14px;color:#262626;font-weight:700;letter-spacing:0.3px;">Expected remaining life:</span>
<span class="t" style="left:572.5px;top:328.86px;font-size:13.4px;color:#262626;">0.000 yrs</span>
<span class="t" style="left:672px;top:163.86px;font-size:13.4px;color:#262626;">(Organization)</span>
<div style="left:320.500px;top:410.500px;width:476px;height:480px;background:#f7f7f7;border:1px solid #dcdcdc"></div>
<div style="left:322px;top:388px;width:96px;height:23px;background:#f0f0f0;border:1px solid #dedede;border-bottom:none"></div>
<div style="left:417px;top:385.500px;width:229.500px;height:26.500px;background:#fafafa;border:1px solid #dedede;border-bottom:none"></div>
<span class="t" style="left:329.3px;top:393.43px;font-size:13.2px;color:#1c1c1c;">Specifications</span>
<span class="t" style="left:425.5px;top:390.63px;font-size:13.2px;color:#1c1c1c;">Electrical Substations Specifications</span>
<div style="left:333px;top:420px;width:462px;height:30px;background:#1e90ff;border:1px solid #5c5c5c;border-right:none"></div>
<span class="t" style="left:342.6px;top:427.51px;font-size:15.7px;color:#fff;font-weight:700;">Electrical Substation Asset Specifications</span>
<div style="left:333px;top:486px;width:461px;height:35px;background:#eef0f5"></div>
<div class="row" style="top:521px;height:34px;background:#d4d4d4"></div>
<span class="t" style="left:739.6px;top:532.96px;font-size:13.4px;color:#262626;">1</span>
<div class="row" style="top:555px;height:35px;background:#f7f7f7"></div>
<div class="row" style="top:590px;height:35px;background:#fff"></div>
<span class="t" style="left:739.6px;top:601.96px;font-size:13.4px;color:#262626;">18 #5</span>
<div class="row" style="top:625px;height:35px;background:#f7f7f7"></div>
<span class="t" style="left:739.6px;top:636.96px;font-size:13.4px;color:#262626;">18 #3</span>
<div class="row" style="top:660px;height:35px;background:#fff"></div>
<span class="t" style="left:739.6px;top:671.96px;font-size:13.4px;color:#262626;">18 #2</span>
<div class="row" style="top:695px;height:35px;background:#f7f7f7"></div>
<span class="t" style="left:739.6px;top:706.96px;font-size:13.4px;color:#262626;">18 #4</span>
<div class="row" style="top:730px;height:35px;background:#fff"></div>
<div class="row" style="top:765px;height:35px;background:#f7f7f7"></div>
<div class="row" style="top:800px;height:35px;background:#fff"></div>
<span class="t" style="left:740.6px;top:811.96px;font-size:13.4px;color:#262626;">quest</span>
<div class="row" style="top:835px;height:30px;background:#f7f7f7"></div>
<div style="left:333px;top:865px;width:461px;height:16px;background:#e6e6e6"></div>
<div style="left:333px;top:452px;width:408px;height:27px;background:#fff;border:1px solid #c4c4c4"></div>
<svg style="left:336.900px;top:456.200px" width="18.800" height="16.300"><use href="#ring"/></svg>
<div style="left:360.700px;top:455.400px;width:71.900px;height:15.800px;background:#0078d7"></div>
<span class="t" style="left:362.2px;top:456.60px;font-size:13px;color:#fff;">Air switches</span>
<div style="left:720px;top:453px;width:20.500px;height:25.500px;background:#cce4f7;border-left:1.300px solid #0078d7"></div>
<svg style="left:720px;top:453px" width="21" height="26"><path d="M5 10.800l5.200 5 5.200-5" fill="none" stroke="#6a6a6a" stroke-width="1.300"/></svg>
<div style="left:749px;top:453.500px;width:60px;height:25px;background:#fff;border:1px solid #c2c2c2;border-radius:4px"></div>
<span class="t" style="left:768.8px;top:459.29px;font-size:13.6px;color:#2c2c2c;letter-spacing:0.4px;">Configure</span>
<div style="left:332px;top:478.500px;width:409px;height:385px;background:#fff;border:1px solid #0078d7;box-shadow:2px 2px 4px rgba(0,0,0,.55);overflow:hidden"><div class="li" style="top:0.00px;background:#0078d7;"><svg style="left:.6px;top:2px;opacity:.55" width="19.800" height="17.300"><use href="#ringw"/></svg><svg style="left:1.100px;top:2.500px" width="18.800" height="16.300"><use href="#ring"/></svg><span class="t" style="color:#fff;">Air switches</span></div><div class="li" style="top:21.25px;"><svg style="left:1.100px;top:2.500px" width="18.800" height="16.300"><use href="#ring"/></svg><span class="t" style="letter-spacing:-.23px;">Buses</span></div><div class="li" style="top:42.50px;"><svg style="left:1.100px;top:2.500px" width="18.800" height="16.300"><use href="#ring"/></svg><span class="t" style="">Circuit breakers</span></div><div class="li" style="top:63.75px;"><svg style="left:1.100px;top:2.500px" width="18.800" height="16.300"><use href="#ring"/></svg><span class="t" style="letter-spacing:.14px;">Circuit breaker operators</span></div><div class="li" style="top:85.00px;"><svg style="left:1.100px;top:2.500px" width="18.800" height="16.300"><use href="#ring"/></svg><span class="t" style="">Circuit switches</span></div><div class="li" style="top:106.25px;"><svg style="left:1.100px;top:2.500px" width="18.800" height="16.300"><use href="#ring"/></svg><span class="t" style="font-size:13px;letter-spacing:-.42px;top:3.2px;">CT PT CCVT SSVT</span></div><div class="li" style="top:127.50px;"><svg style="left:1.100px;top:2.500px" width="18.800" height="16.300"><use href="#ring"/></svg><span class="t" style="">Fire systems</span></div><div class="li" style="top:148.75px;"><svg style="left:1.100px;top:2.500px" width="18.800" height="16.300"><use href="#ring"/></svg><span class="t" style="letter-spacing:.13px;">On load tap changers (LTC)</span></div><div class="li" style="top:170.00px;"><svg style="left:1.100px;top:2.500px" width="18.800" height="16.300"><use href="#ring"/></svg><span class="t" style="letter-spacing:.14px;">Motor operated air switches (MOAS)</span></div><div class="li" style="top:191.25px;"><svg style="left:1.100px;top:2.500px" width="18.800" height="16.300"><use href="#ring"/></svg><span class="t" style="">Regulators single phase</span></div><div class="li" style="top:212.50px;"><svg style="left:1.100px;top:2.500px" width="18.800" height="16.300"><use href="#ring"/></svg><span class="t" style="letter-spacing:.14px;">Regulators three phase</span></div><div class="li" style="top:233.75px;"><svg style="left:1.100px;top:2.500px" width="18.800" height="16.300"><use href="#ring"/></svg><span class="t" style="letter-spacing:0;">Series capacitor banks</span></div><div class="li" style="top:255.00px;"><svg style="left:1.100px;top:2.500px" width="18.800" height="16.300"><use href="#ring"/></svg><span class="t" style="">Series reactors</span></div><div class="li" style="top:276.25px;"><svg style="left:1.100px;top:2.500px" width="18.800" height="16.300"><use href="#ring"/></svg><span class="t" style="">Shunt capacitor banks</span></div><div class="li" style="top:297.50px;"><svg style="left:1.100px;top:2.500px" width="18.800" height="16.300"><use href="#ring"/></svg><span class="t" style="">Shunt reactors</span></div><div class="li" style="top:318.75px;"><svg style="left:1.100px;top:2.500px" width="18.800" height="16.300"><use href="#ring"/></svg><span class="t" style="letter-spacing:.22px;">Station batteries</span></div><div class="li" style="top:340.00px;"><svg style="left:1.100px;top:2.500px" width="18.800" height="16.300"><use href="#ring"/></svg><span class="t" style="letter-spacing:.17px;">Station battery chargers</span></div><div class="li" style="top:361.25px;"><svg style="left:1.100px;top:2.500px" width="18.800" height="16.300"><use href="#ring"/></svg><span class="t" style="letter-spacing:0;">Synchronous condensers</span></div></div>
<svg style="left:729.300px;top:469.800px;z-index:40" width="13" height="20.500" viewBox="0 0 14 22"><path d="M1 1v16.500l3.800-3.600 2.700 6.300 2.600-1.100-2.700-6.200h5.300z" fill="#fff" stroke="#000" stroke-width="1"/></svg>
</body></html>
